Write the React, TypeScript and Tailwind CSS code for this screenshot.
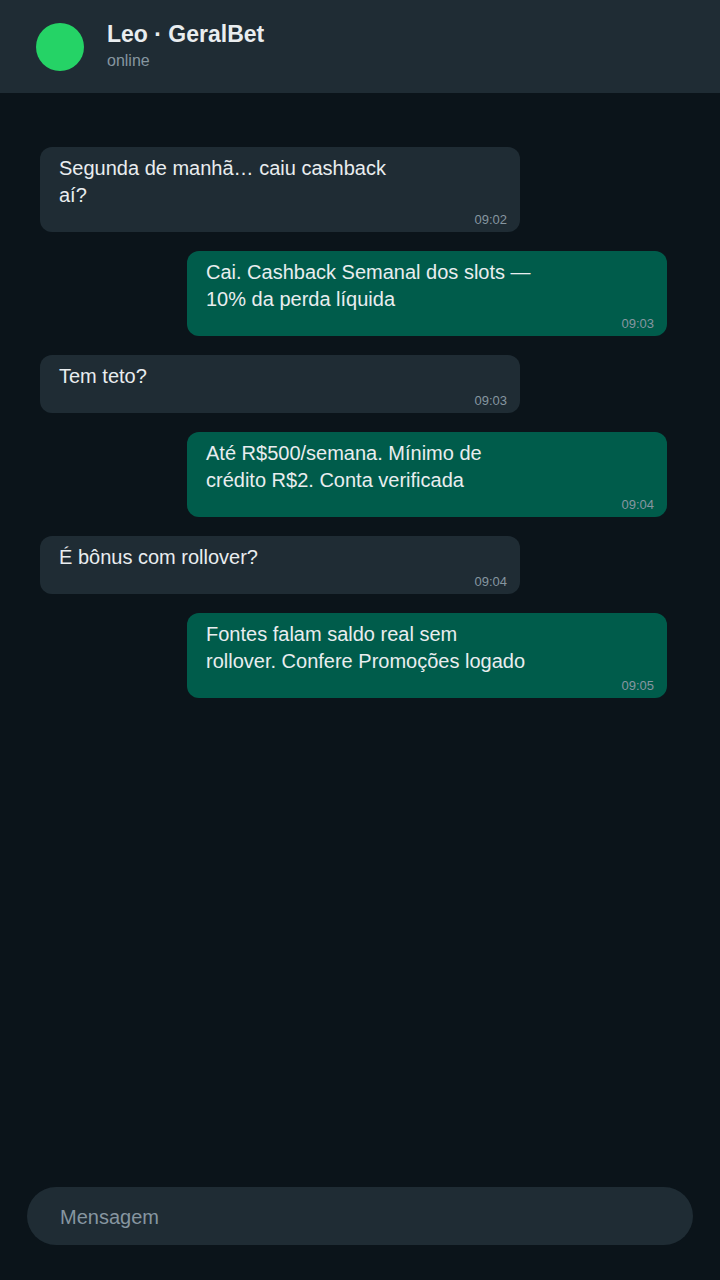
type Message = { lines: string[]; time: string; mine: boolean };

const messages: Message[] = [
  { lines: ["Segunda de manhã… caiu cashback", "aí?"], time: "09:02", mine: false },
  { lines: ["Cai. Cashback Semanal dos slots —", "10% da perda líquida"], time: "09:03", mine: true },
  { lines: ["Tem teto?"], time: "09:03", mine: false },
  { lines: ["Até R$500/semana. Mínimo de", "crédito R$2. Conta verificada"], time: "09:04", mine: true },
  { lines: ["É bônus com rollover?"], time: "09:04", mine: false },
  { lines: ["Fontes falam saldo real sem", "rollover. Confere Promoções logado"], time: "09:05", mine: true },
];

function Bubble({ message }: { message: Message }) {
  return (
    <li
      className={`flex w-4/5 max-w-[480px] flex-col rounded-xl pt-2 pr-[13px] pb-[2px] pl-[19px] ${
        message.mine ? "self-end bg-[#005c4b]" : "self-start bg-[#1f2c34]"
      }`}
    >
      <p className="text-[20px] leading-[27px] text-[#e9edef]">
        {message.lines.map((line) => (
          <span key={line} className="block">
            {line}
          </span>
        ))}
      </p>
      <time className="self-end text-[13px] leading-[21px] text-[#8696a0]">{message.time}</time>
    </li>
  );
}

export default function App() {
  return (
    <div className="flex min-h-screen flex-col bg-[#0b141a] font-['Liberation_Sans',Arial,sans-serif]">
      <header className="flex items-center gap-[23px] bg-[#1f2c34] px-9 pt-[23px] pb-[22px]">
        <div className="size-12 rounded-full bg-[#25d366]" />
        <div>
          <h1 className="mb-[6px] text-[23px] leading-[22px] font-bold text-[#e9edef]">Leo · GeralBet</h1>
          <p className="text-[16px] leading-5 text-[#8696a0]">online</p>
        </div>
      </header>
      <main className="flex-1 pt-[54px] pr-[53px] pb-6 pl-10">
        <ul className="flex flex-col gap-[19px]">
          {messages.map((message) => (
            <Bubble key={message.time + message.lines[0]} message={message} />
          ))}
        </ul>
      </main>
      <footer className="px-[27px] pb-[35px]">
        <input
          type="text"
          aria-label="Mensagem"
          placeholder="Mensagem"
          className="block h-[58px] w-full rounded-full bg-[#1f2c34] px-[33px] pt-[2px] text-[20px] text-[#e9edef] outline-none placeholder:text-[#8696a0]"
        />
      </footer>
    </div>
  );
}
